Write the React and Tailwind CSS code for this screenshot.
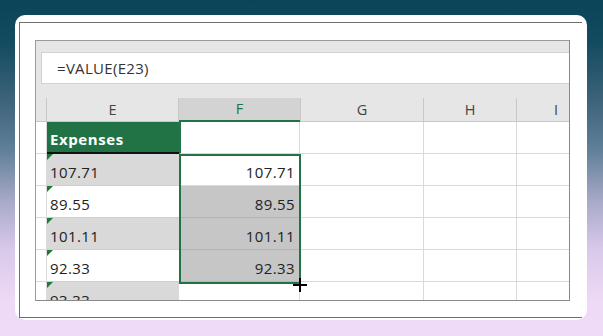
import React from "react";

const font = { fontFamily: '"Open Sans", "Noto Sans", sans-serif' };

function Tri() {
  return (
    <div className="absolute left-0 top-0 w-0 h-0 border-t-[6px] border-r-[6px] border-t-[#1d7a37] border-r-transparent" />
  );
}

const rows = [
  { e: "107.71", eBg: "bg-[#d9d9d9]", f: "107.71", fBg: "bg-white" },
  { e: "89.55", eBg: "bg-white", f: "89.55", fBg: "bg-[#c6c6c6]" },
  { e: "101.11", eBg: "bg-[#d9d9d9]", f: "101.11", fBg: "bg-[#c6c6c6]" },
  { e: "92.33", eBg: "bg-white", f: "92.33", fBg: "bg-[#c6c6c6]" },
  { e: "93.33", eBg: "bg-[#d9d9d9]", f: "", fBg: "bg-white", partial: true },
];

export default function App() {
  return (
    <div
      className="w-[603px] h-[336px] pt-[15px] pl-[15px] bg-[linear-gradient(180deg,#0b4458_0%,#124a5f_12%,#3d637a_30%,#62809a_45%,#a8aac8_60%,#d8c8ea_74%,#eedaf6_90%,#efdbf7_100%)]"
      style={font}
    >
      <div className="w-[572px] h-[305px] bg-white rounded-[10px] pt-[7px] pl-[4px]">
        <div className="w-[563px] h-[296px] border-l border-t border-b border-[#6e6e6e] pl-[15px] pt-[17px]">
          <div className="relative w-[535px] h-[261px] border border-[#9a9a9a] border-r-[#8a8a8a] border-b-[#8a8a8a] bg-white overflow-hidden">
            {/* formula area */}
            <div className="h-[57px] bg-[#e6e6e6] pt-[11px] pl-[5px]">
              <div className="h-[32px] bg-white border border-r-0 border-[#d2d2d2] pl-[15px] flex items-center text-[15px] text-[#333] tracking-[0.3px]">
                =VALUE(E23)
              </div>
            </div>
            {/* header row */}
            <div className="flex h-[24px] bg-[#e6e6e6] text-[14.5px] text-[#444]">
              <div className="w-[11px] shrink-0 border-r border-[#c8c8c8] border-b border-b-[#c8c8c8]" />
              <div className="w-[132px] shrink-0 flex items-center justify-center border-r border-[#c8c8c8] border-b border-b-[#c8c8c8]">E</div>
              <div className="w-[121px] shrink-0 flex items-center justify-center bg-[#d3d3d3] border-b-2 border-[#217346] text-[#217346]">F</div>
              <div className="w-[124px] shrink-0 flex items-center justify-center border-l border-r border-[#c8c8c8] border-b border-b-[#c8c8c8]">G</div>
              <div className="w-[93px] shrink-0 flex items-center justify-center border-r border-[#c8c8c8] border-b border-b-[#c8c8c8]">H</div>
              <div className="w-[52px] shrink-0 flex items-center justify-end pr-[11px] border-b border-[#c8c8c8]">I</div>
            </div>
            {/* Expenses row */}
            <div className="flex h-[32px] text-[15px]">
              <div className="w-[11px] shrink-0 border-r border-b border-[#dadada]" />
              <div className="w-[132px] shrink-0 bg-[#217346] border-b-2 border-[#111] text-white font-bold tracking-[0.6px] flex items-end pl-[3px] pb-[2px]">
                Expenses
              </div>
              <div className="w-[121px] shrink-0 bg-white border-l-2 border-[#217346] border-r border-r-[#dadada] border-b border-b-[#dadada]" />
              <div className="w-[124px] shrink-0 border-r border-b border-[#dadada]" />
              <div className="w-[93px] shrink-0 border-r border-b border-[#dadada]" />
              <div className="w-[52px] shrink-0 border-b border-[#dadada]" />
            </div>
            {rows.map((r, i) => (
              <div key={i} className="flex h-[32px] text-[15px] text-[#222] tracking-[0.4px]">
                <div className="w-[11px] shrink-0 border-r border-b border-[#dadada]" />
                <div className={`relative w-[132px] shrink-0 ${r.eBg} border-b border-[#cfcfcf] flex items-end pl-[3px] pb-[2px]`}>
                  <Tri />
                  {r.e}
                </div>
                <div className={`w-[121px] shrink-0 ${r.fBg} border-b ${r.fBg === "bg-white" ? "border-[#dadada]" : "border-[#b4b4b4]"} border-r border-r-[#dadada] flex items-end justify-end pr-[4px] pb-[2px]`}>
                  {r.f}
                </div>
                <div className="w-[124px] shrink-0 border-r border-b border-[#dadada]" />
                <div className="w-[93px] shrink-0 border-r border-b border-[#dadada]" />
                <div className="w-[52px] shrink-0 border-b border-[#dadada]" />
              </div>
            ))}
            {/* selection */}
            <div className="absolute left-[143px] top-[113px] w-[122px] h-[130px] border-2 border-[#217346]" />
            {/* fill cursor */}
            <div className="absolute left-[257px] top-[237px] w-[14px] h-[14px]">
              <div className="absolute left-[6px] top-0 w-[2px] h-[14px] bg-black" />
              <div className="absolute left-0 top-[6px] w-[14px] h-[2px] bg-black" />
            </div>
          </div>
        </div>
      </div>
    </div>
  );
}
